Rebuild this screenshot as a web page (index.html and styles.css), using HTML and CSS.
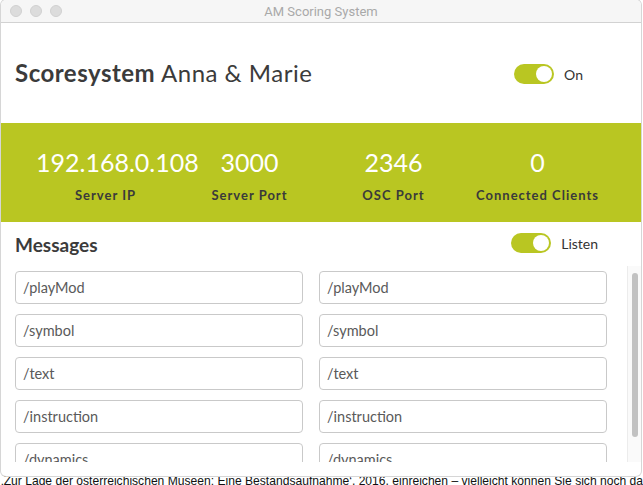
FILE: index.html
```html
<!DOCTYPE html>
<html lang="de">
<head>
<meta charset="utf-8">
<title>AM Scoring System</title>
<link rel="stylesheet" href="styles.css">
</head>
<body>
<div class="desktop">
  <p class="bg-text">‚Zur Lage der österreichischen Museen: Eine Bestandsaufnahme‘, 2016, einreichen – vielleicht können Sie sich noch dar</p>
  <div class="window">
    <div class="titlebar">
      <div class="lights"><span></span><span></span><span></span></div>
      <div class="title">AM Scoring System</div>
      <div></div>
    </div>
    <header class="app-header">
      <h1><b>Scoresystem</b> Anna &amp; Marie</h1>
      <div class="switch-group on-group"><span class="switch"><span class="knob"></span></span><span class="switch-label">On</span></div>
    </header>
    <section class="stats">
      <div class="stat"><div class="num">192.168.0.108</div><div class="lbl">Server IP</div></div>
      <div class="stat"><div class="num">3000</div><div class="lbl">Server Port</div></div>
      <div class="stat"><div class="num">2346</div><div class="lbl">OSC Port</div></div>
      <div class="stat"><div class="num">0</div><div class="lbl">Connected Clients</div></div>
    </section>
    <section class="messages">
      <div class="msg-head">
        <h2>Messages</h2>
        <div class="switch-group listen-group"><span class="switch"><span class="knob"></span></span><span class="switch-label">Listen</span></div>
      </div>
      <div class="scroll">
        <div class="grid">
          <input class="field" value="/playMod"><input class="field" value="/playMod">
          <input class="field" value="/symbol"><input class="field" value="/symbol">
          <input class="field" value="/text"><input class="field" value="/text">
          <input class="field" value="/instruction"><input class="field" value="/instruction">
          <input class="field" value="/dynamics"><input class="field" value="/dynamics">
        </div>
        <div class="scrollbar"><div class="thumb"></div></div>
      </div>
    </section>
  </div>
</div>
</body>
</html>
```
FILE: styles.css
```css
* { box-sizing: border-box; }
html, body { margin: 0; padding: 0; background: #ffffff; }

.desktop {
  position: relative;
  width: 643px;
  height: 485px;
  overflow: hidden;
  background: #ffffff;
}

.bg-text {
  position: absolute;
  top: 474px;
  left: 1px;
  margin: 0;
  white-space: nowrap;
  font-family: "Liberation Sans", Arial, sans-serif;
  font-size: 12.1px;
  line-height: 14px;
  color: #111;
}

.window {
  position: absolute;
  top: 0;
  left: 1px;
  width: 640px;
  height: 476px;
  z-index: 1;
  background: #fff;
  border-radius: 5px;
  overflow: hidden;
  display: flex;
  flex-direction: column;
  box-shadow: 0 0 0 1px #d6d6d6;
}

.titlebar {
  height: 23px;
  flex: none;
  background: #f6f6f6;
  border-bottom: 1px solid #d2d2d2;
  display: grid;
  grid-template-columns: 1fr auto 1fr;
  align-items: center;
}
.lights { display: flex; gap: 8px; padding-left: 9px; }
.lights span {
  width: 12px; height: 12px; border-radius: 50%;
  background: #dcdcdc;
  border: 1px solid #d0d0d0;
}
.title {
  font-family: Roboto, "Liberation Sans", sans-serif;
  font-size: 13px;
  color: #a9a9a9;
}

.app-header {
  height: 100px;
  flex: none;
  display: flex;
  align-items: center;
  justify-content: space-between;
  padding: 0 14px 2px 14px;
}
.app-header h1 {
  margin: 0;
  font-family: Lato, sans-serif;
  font-weight: 400;
  font-size: 24px;
  letter-spacing: 0.5px;
  color: #3b3b3b;
}
.app-header h1 b { font-weight: 700; }

.switch-group {
  display: flex;
  align-items: center;
  gap: 10px;
  font-family: Lato, sans-serif;
  font-size: 14px;
  color: #333;
}
.on-group { margin-right: 44px; margin-top: 4px; }
.switch {
  width: 40px; height: 20px; border-radius: 10px;
  background: #b9c622;
  display: flex; align-items: center; justify-content: flex-end;
  padding-right: 2px;
}
.knob { width: 16px; height: 16px; border-radius: 50%; background: #fff; }

.stats {
  height: 99px;
  flex: none;
  background: #b9c622;
  display: grid;
  grid-template-columns: repeat(4, 139px);
  column-gap: 5px;
  padding: 24px 0 0 35px;
}
.stat { text-align: center; }
.num {
  font-family: Lato, sans-serif;
  font-size: 25px;
  line-height: 30px;
  color: #fff;
  white-space: nowrap;
}
.lbl {
  margin-top: 10px;
  font-family: Lato, sans-serif;
  font-weight: 700;
  font-size: 13px;
  line-height: 16px;
  letter-spacing: 1px;
  color: #3a3a3a;
  white-space: nowrap;
}

.messages { flex: 1; display: flex; flex-direction: column; min-height: 0; }
.msg-head {
  display: flex;
  justify-content: space-between;
  align-items: flex-start;
  padding: 11px 14px 0 14px;
  height: 44px;
  flex: none;
}
.msg-head h2 {
  margin: 0;
  font-family: Lato, sans-serif;
  font-weight: 700;
  font-size: 19px;
  line-height: 24px;
  color: #3b3b3b;
}
.listen-group { margin-right: 29px; }

.scroll {
  height: 196px;
  flex: none;
  display: flex;
  overflow: hidden;
}
.grid {
  flex: 1;
  display: grid;
  grid-template-columns: 288px 288px;
  column-gap: 16px;
  row-gap: 10px;
  align-content: start;
  padding: 5px 0 0 14px;
}
.field {
  height: 33px;
  width: 288px;
  border: 1px solid #c9c9c9;
  border-radius: 4px;
  padding: 0 7px;
  font-family: Lato, sans-serif;
  font-size: 14.5px;
  color: #5a5a5a;
  background: #fff;
  outline: none;
}
.scrollbar {
  width: 14px;
  flex: none;
  background: #fafafa;
  border-left: 1px solid #ececec;
  padding: 7px 3px 0 4px;
}
.thumb {
  height: 164px;
  border-radius: 4px;
  background: #c2c2c2;
}
```
